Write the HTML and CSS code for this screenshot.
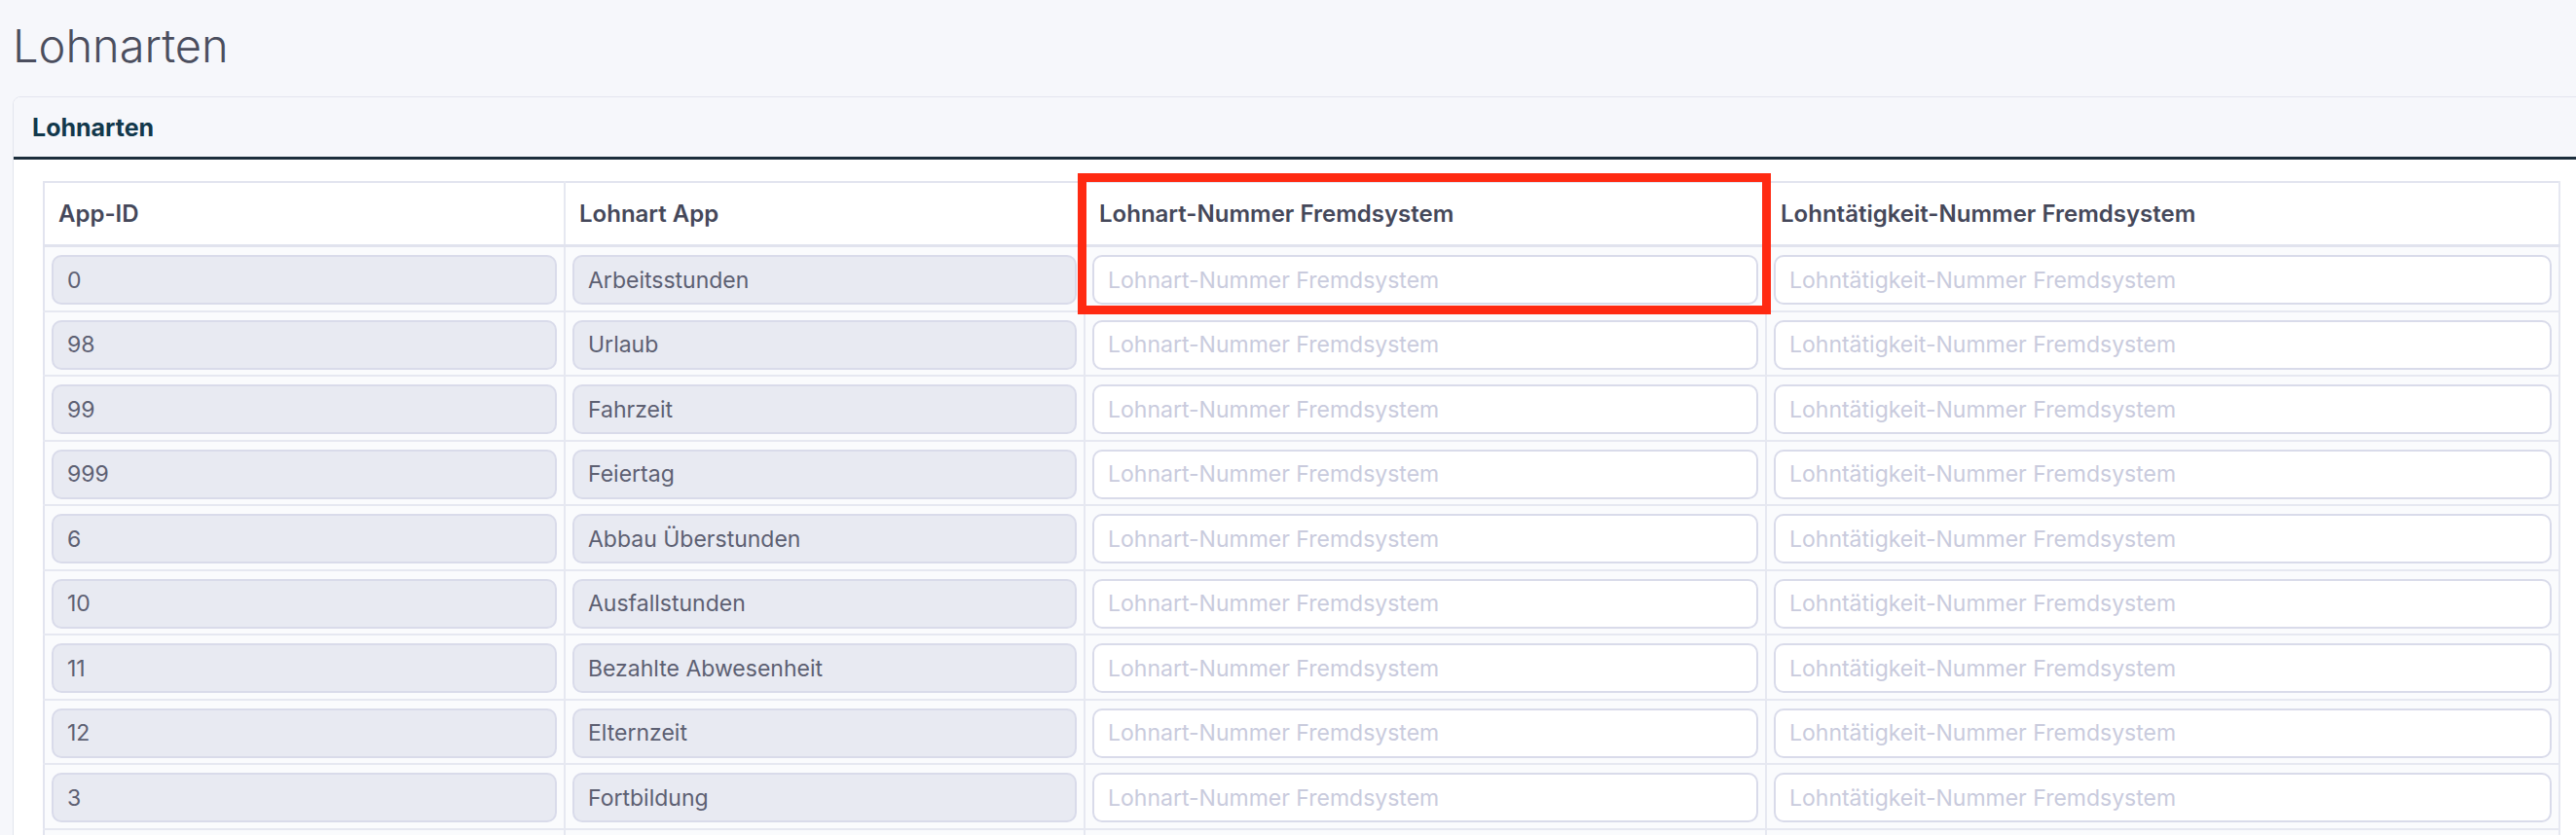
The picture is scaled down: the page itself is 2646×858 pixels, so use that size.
FILE: index.html
```html
<!DOCTYPE html>
<html lang="de">
<head>
  <meta charset="UTF-8" />
  <meta name="viewport" content="width=device-width, initial-scale=1.0" />
  <title>Lohnarten</title>
  <link rel="stylesheet" href="styles.css">
</head>
<body>
  <div class="page">
    <h1 class="page-title">Lohnarten</h1>

    <div class="card">
      <div class="card-header">Lohnarten</div>
      <div class="card-body">
        <table class="wage-table">
          <colgroup>
            <col class="col-id">
            <col class="col-name">
            <col class="col-ext">
            <col class="col-act">
          </colgroup>
          <thead>
            <tr>
              <th>App-ID</th>
              <th>Lohnart App</th>
              <th>Lohnart-Nummer Fremdsystem</th>
              <th>Lohntätigkeit-Nummer Fremdsystem</th>
            </tr>
          </thead>
          <tbody>
            <tr>
              <td><input class="field" value="0" readonly></td>
              <td><input class="field" value="Arbeitsstunden" readonly></td>
              <td><input class="field" placeholder="Lohnart-Nummer Fremdsystem"></td>
              <td><input class="field" placeholder="Lohntätigkeit-Nummer Fremdsystem"></td>
            </tr>
            <tr>
              <td><input class="field" value="98" readonly></td>
              <td><input class="field" value="Urlaub" readonly></td>
              <td><input class="field" placeholder="Lohnart-Nummer Fremdsystem"></td>
              <td><input class="field" placeholder="Lohntätigkeit-Nummer Fremdsystem"></td>
            </tr>
            <tr>
              <td><input class="field" value="99" readonly></td>
              <td><input class="field" value="Fahrzeit" readonly></td>
              <td><input class="field" placeholder="Lohnart-Nummer Fremdsystem"></td>
              <td><input class="field" placeholder="Lohntätigkeit-Nummer Fremdsystem"></td>
            </tr>
            <tr>
              <td><input class="field" value="999" readonly></td>
              <td><input class="field" value="Feiertag" readonly></td>
              <td><input class="field" placeholder="Lohnart-Nummer Fremdsystem"></td>
              <td><input class="field" placeholder="Lohntätigkeit-Nummer Fremdsystem"></td>
            </tr>
            <tr>
              <td><input class="field" value="6" readonly></td>
              <td><input class="field" value="Abbau Überstunden" readonly></td>
              <td><input class="field" placeholder="Lohnart-Nummer Fremdsystem"></td>
              <td><input class="field" placeholder="Lohntätigkeit-Nummer Fremdsystem"></td>
            </tr>
            <tr>
              <td><input class="field" value="10" readonly></td>
              <td><input class="field" value="Ausfallstunden" readonly></td>
              <td><input class="field" placeholder="Lohnart-Nummer Fremdsystem"></td>
              <td><input class="field" placeholder="Lohntätigkeit-Nummer Fremdsystem"></td>
            </tr>
            <tr>
              <td><input class="field" value="11" readonly></td>
              <td><input class="field" value="Bezahlte Abwesenheit" readonly></td>
              <td><input class="field" placeholder="Lohnart-Nummer Fremdsystem"></td>
              <td><input class="field" placeholder="Lohntätigkeit-Nummer Fremdsystem"></td>
            </tr>
            <tr>
              <td><input class="field" value="12" readonly></td>
              <td><input class="field" value="Elternzeit" readonly></td>
              <td><input class="field" placeholder="Lohnart-Nummer Fremdsystem"></td>
              <td><input class="field" placeholder="Lohntätigkeit-Nummer Fremdsystem"></td>
            </tr>
            <tr>
              <td><input class="field" value="3" readonly></td>
              <td><input class="field" value="Fortbildung" readonly></td>
              <td><input class="field" placeholder="Lohnart-Nummer Fremdsystem"></td>
              <td><input class="field" placeholder="Lohntätigkeit-Nummer Fremdsystem"></td>
            </tr>
            <tr>
              <td><input class="field" value="7" readonly></td>
              <td><input class="field" value="Krankheit" readonly></td>
              <td><input class="field" placeholder="Lohnart-Nummer Fremdsystem"></td>
              <td><input class="field" placeholder="Lohntätigkeit-Nummer Fremdsystem"></td>
            </tr>
          </tbody>
        </table>
      </div>
    </div>

    <!-- highlight drawn over the column -->
    <div class="highlight"></div>
  </div>
</body>
</html>
```

FILE: styles.css
```css
html, body {
  overflow: hidden;
}
body {
  margin: 0;
  background-color: #f6f7fb;
  font-family: Inter, "Noto Sans", sans-serif;
  color: #4e5161;
}
.page {
  position: relative;
  padding-left: 13px;
}
.page-title {
  margin: 0;
  padding-top: 18px;
  font-size: 47px;
  line-height: 58px;
  font-weight: 300;
  color: #4b4e5e;
  margin-bottom: 23px;
}
.card {
  margin-right: -12px;
  border: 1px solid #e3e5ee;
  border-radius: 8px;
  background-color: #fff;
  overflow: hidden;
}
.card-header {
  display: flex;
  align-items: center;
  height: 61px;
  padding: 0 19px;
  background-color: #f6f7fb;
  border-bottom: 3px solid #1c2e3c;
  font-size: 25px;
  font-weight: 700;
  color: #12384b;
}
.card-body {
  padding: 22px 30px 0 30px;
}
.wage-table {
  width: 100%;
  table-layout: fixed;
  border-collapse: collapse;
  border: 2px solid #e2e4ef;
}
.col-id { width: 535px; }
.col-name { width: 534px; }
.col-ext { width: 700px; }
.col-act { width: 815px; }
.wage-table th {
  height: 63px;
  padding: 0 14px;
  text-align: left;
  font-size: 24px;
  font-weight: 600;
  color: #45485a;
  border-right: 2px solid #e6e8f1;
  border-bottom: 3px solid #e1e3ee;
}
.wage-table td {
  padding: 8px 7px 5.5px 7px;
  border-right: 2px solid #e6e8f1;
  border-bottom: 2px solid #e6e8f1;
  background-color: #fafbfd;
}
.field {
  display: block;
  box-sizing: border-box;
  width: 100%;
  height: 51px;
  padding: 0 14px;
  border: 2px solid #d9dbea;
  border-radius: 10px;
  background-color: #fff;
  font-family: Inter, "Noto Sans", sans-serif;
  font-size: 23px;
  color: #5d6072;
  outline: none;
}
.field[readonly] {
  background-color: #e8eaf2;
}
.field::placeholder {
  color: #c9cbdd;
}
.highlight {
  position: absolute;
  left: 1107px;
  top: 178px;
  width: 712px;
  height: 145px;
  box-sizing: border-box;
  border: 9px solid #ff2a12;
}
```
